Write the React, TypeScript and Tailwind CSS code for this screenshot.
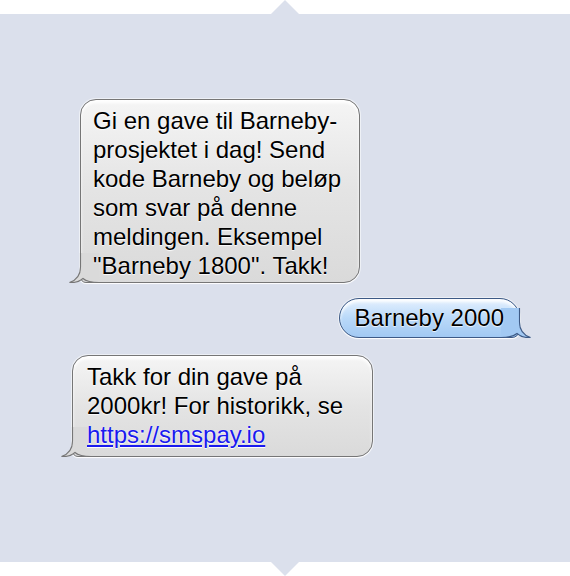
const font = { fontFamily: '"Liberation Sans", Arial, Helvetica, sans-serif' };

type TailProps = { side: "left" | "right"; fill: string; stroke: string };

const Tail = ({ side, fill, stroke }: TailProps) => {
  const outline =
    "M11.5 0 L11.5 14 C11.5 22 8 27 0.5 29.5 C6 30 10.5 28.5 14 25.5 C17.5 28.5 22 29.5 30 29.5";
  return (
    <svg
      width="30"
      height="30"
      viewBox="0 0 30 30"
      className={`absolute -bottom-px ${side === "left" ? "-left-[12px]" : "-right-[12px] -scale-x-100"}`}
    >
      <path d={`${outline} L30 0 Z`} fill={fill} />
      <path d={outline} fill="none" stroke={stroke} strokeWidth="1.1" />
    </svg>
  );
};

const GrayBubble = ({ width, children }: { width: string; children: React.ReactNode }) => (
  <div
    className={`relative ${width} rounded-[16px] rounded-bl-[6px] border border-[#767676] bg-gradient-to-b from-[#f5f5f5] via-[#e4e4e4] to-[#dadada] shadow-[inset_0_3px_3px_rgba(255,255,255,0.95),0_1px_1px_rgba(255,255,255,0.9),0_0_0_1px_rgba(255,255,255,0.5)]`}
  >
    <Tail side="left" fill="#dadada" stroke="#767676" />
    <div className="relative pl-[12px] pr-2 pt-[6px] pb-[2px] text-[24px] leading-[29px] text-black [text-shadow:0_0_1px_rgba(255,255,255,0.9),0_1px_1px_rgba(255,255,255,0.9)]">
      {children}
    </div>
  </div>
);

export default function App() {
  return (
    <div className="flex h-[576px] w-[570px] flex-col bg-white" style={font}>
      <svg width="570" height="14" viewBox="0 0 570 14" className="block shrink-0">
        <path d="M271 14 L285 0 L299 14 Z" fill="#dbe0ec" />
      </svg>

      <div className="flex h-[548px] flex-col bg-[#dbe0ec] pt-[85px]">
        <div className="ml-[80px]">
          <GrayBubble width="w-[280px]">
            Gi en gave til Barneby-
            <br />
            prosjektet i dag! Send
            <br />
            kode Barneby og beløp
            <br />
            som svar på denne
            <br />
            meldingen. Eksempel
            <br />
            "Barneby 1800". Takk!
          </GrayBubble>
        </div>

        <div className="mr-[50px] mt-[15px] flex justify-end">
          <div className="relative h-[40px] rounded-[20px] rounded-br-[8px] border border-[#3d5a86] bg-gradient-to-b from-[#e6f1fe] via-[#b9d9f9] to-[#a2c9f3] shadow-[inset_0_3px_3px_rgba(255,255,255,0.9),0_1px_1px_rgba(255,255,255,0.9),0_0_0_1px_rgba(255,255,255,0.5)]">
            <Tail side="right" fill="#a2c9f3" stroke="#3d5a86" />
            <div className="relative px-[15px] pt-[4px] text-[24px] leading-[29px] text-black [text-shadow:0_0_1px_rgba(255,255,255,0.9),0_1px_1px_rgba(255,255,255,0.8)]">
              Barneby 2000
            </div>
          </div>
        </div>

        <div className="ml-[72px] mt-[17px]">
          <GrayBubble width="w-[301px]">
            <div className="pl-[2px] pb-[5px]">
              Takk for din gave på
              <br />
              2000kr! For historikk, se
              <br />
              <a href="#" className="text-[#1a1aee] underline">
                https://smspay.io
              </a>
            </div>
          </GrayBubble>
        </div>
      </div>

      <svg width="570" height="14" viewBox="0 0 570 14" className="block shrink-0">
        <path d="M271 0 L285 14 L299 0 Z" fill="#dbe0ec" />
      </svg>
    </div>
  );
}
